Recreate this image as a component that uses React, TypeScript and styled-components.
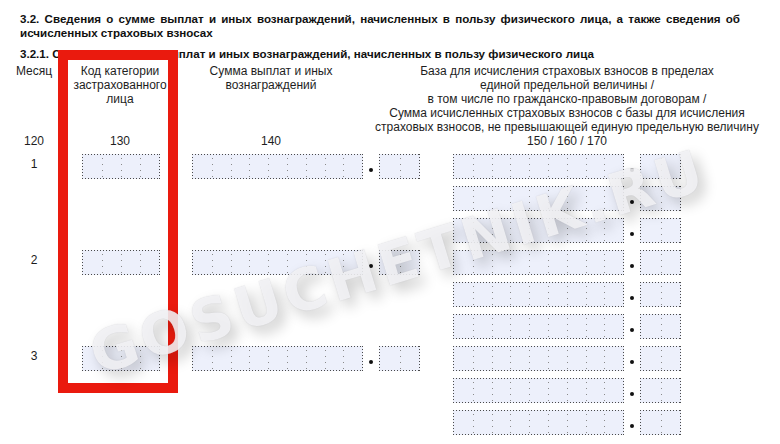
import React from "react";
import styled, { createGlobalStyle } from "styled-components";

const Global = createGlobalStyle`
  html, body { margin: 0; padding: 0; background: #fff; }
  body { font-family: "Liberation Sans", Arial, sans-serif; color: #1b1b1b; }
`;

const Page = styled.div`
  position: relative;
  width: 780px;
  height: 444px;
  overflow: hidden;
  background: #fff;
`;

const Titles = styled.div`
  padding: 12px 0 0 20px;
  display: flex;
  flex-direction: column;
  gap: 7px;
`;

const Title = styled.div<{ $size: number }>`
  font-weight: bold;
  font-size: ${(p) => p.$size}px;
  line-height: 14px;
  color: #111;
  white-space: nowrap;
`;

const JustifiedLine = styled.span`
  display: block;
  width: 720px;
  white-space: normal;
  text-align: justify;
  text-align-last: justify;
`;

const HeadGrid = styled.div<{ $top?: number }>`
  display: grid;
  grid-template-columns: 52px 120px 182px 410px;
  margin-left: 8px;
  margin-top: ${(p) => p.$top ?? 0}px;
  font-size: 12px;
  line-height: 14px;
  color: #1e1e1e;
`;

const HeadCell = styled.div`
  display: flex;
  flex-direction: column;
  align-items: center;
  white-space: nowrap;
  text-align: center;
`;

const Body = styled.div`
  margin: 6px 0 0 8px;
  display: flex;
  flex-direction: column;
  gap: 7px;
`;

const MonthGroup = styled.div`
  display: grid;
  grid-template-columns: 52px 120px 260px auto;
  align-items: start;
`;

const MonthLabel = styled.div`
  font-size: 12px;
  line-height: 21px;
  text-align: center;
`;

const CodeCol = styled.div`
  display: flex;
  justify-content: center;
  padding-left: 2px;
`;

const SumCol = styled.div<{ $pad: number }>`
  display: flex;
  flex-direction: column;
  gap: 7px;
  padding-left: ${(p) => p.$pad}px;
`;

const FieldLine = styled.div`
  display: flex;
  align-items: flex-end;
`;

const dots = (c: string) => `
  background-image:
    linear-gradient(to right, ${c} 1px, transparent 1px),
    linear-gradient(to right, ${c} 1px, transparent 1px),
    linear-gradient(to bottom, ${c} 1px, transparent 1px),
    linear-gradient(to bottom, ${c} 1px, transparent 1px);
  background-size: 3px 1px, 3px 1px, 1px 3px, 1px 3px;
  background-position: left top, left bottom, left top, right top;
  background-repeat: repeat-x, repeat-x, repeat-y, repeat-y;
`;

const Box = styled.div`
  display: flex;
  height: 25px;
  box-sizing: border-box;
  padding: 1px;
  background-color: #edf0fb;
  ${dots("#4a4a4a")}
`;

const Cell = styled.span<{ $w: number; $first?: boolean }>`
  width: ${(p) => p.$w}px;
  height: 100%;
  background-image: ${(p) =>
    p.$first ? "none" : "linear-gradient(to bottom, #8a8a8a 1px, transparent 1px)"};
  background-size: 1px 6px;
  background-position: left 3px;
  background-repeat: repeat-y;
`;

const Dot = styled.span`
  width: 4px;
  height: 4px;
  border-radius: 50%;
  background: #111;
  margin: 0 6px 7px 6px;
`;

const Frame = styled.div`
  position: absolute;
  left: 58px;
  top: 50px;
  width: 120px;
  height: 343px;
  box-sizing: border-box;
  border: 10px solid #ea1a0e;
`;

const Watermark = styled.div`
  position: absolute;
  left: 398px;
  top: 262px;
  transform: translate(-50%, -50%) rotate(-17deg);
  font-family: "DejaVu Sans", "Liberation Sans", sans-serif;
  font-weight: bold;
  font-size: 58px;
  letter-spacing: 4px;
  white-space: nowrap;
  color: rgba(250, 250, 252, 0.8);
  text-shadow: 0 0 1px rgba(150, 150, 160, 0.45), 4px 8px 14px rgba(0, 0, 0, 0.22);
  pointer-events: none;
`;

const Field: React.FC<{ n: number; w: number }> = ({ n, w }) => (
  <Box>
    {Array.from({ length: n }).map((_, i) => (
      <Cell key={i} $w={w} $first={i === 0} />
    ))}
  </Box>
);

const Amount: React.FC = () => (
  <FieldLine>
    <Field n={9} w={18.8} />
    <Dot />
    <Field n={2} w={19.5} />
  </FieldLine>
);

const months = ["1", "2", "3"];

export default function App() {
  return (
    <Page>
      <Global />
      <Titles>
        <Title $size={11.6}>
          <JustifiedLine>
            3.2. Сведения о сумме выплат и иных вознаграждений, начисленных в пользу физического лица, а также сведения об
          </JustifiedLine>
          исчисленных страховых взносах
        </Title>
        <Title $size={11.6}>
          3.2.1. Сведения о сумме выплат и иных вознаграждений, начисленных в пользу физического лица
        </Title>
      </Titles>

      <HeadGrid $top={3}>
        <HeadCell>Месяц</HeadCell>
        <HeadCell>
          <span>Код категории</span>
          <span>застрахованного</span>
          <span>лица</span>
        </HeadCell>
        <HeadCell>
          <span>Сумма выплат и иных</span>
          <span>вознаграждений</span>
        </HeadCell>
        <HeadCell>
          <span>База для исчисления страховых взносов в пределах</span>
          <span>единой предельной величины /</span>
          <span>в том числе по гражданско-правовым договорам /</span>
          <span>Сумма исчисленных страховых взносов с базы для исчисления</span>
          <span>страховых взносов, не превышающей единую предельную величину</span>
        </HeadCell>
      </HeadGrid>

      <HeadGrid>
        <HeadCell>120</HeadCell>
        <HeadCell>130</HeadCell>
        <HeadCell>140</HeadCell>
        <HeadCell>150 / 160 / 170</HeadCell>
      </HeadGrid>

      <Body>
        {months.map((m) => (
          <MonthGroup key={m}>
            <MonthLabel>{m}</MonthLabel>
            <CodeCol>
              <Field n={4} w={19} />
            </CodeCol>
            <SumCol $pad={12}>
              <Amount />
            </SumCol>
            <SumCol $pad={13}>
              <Amount />
              <Amount />
              <Amount />
            </SumCol>
          </MonthGroup>
        ))}
      </Body>

      <Frame />
      <Watermark>GOSUCHETNIK.RU</Watermark>
    </Page>
  );
}
